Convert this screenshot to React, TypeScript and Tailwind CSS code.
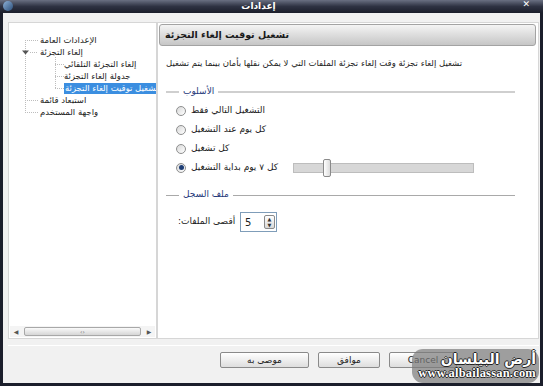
const tree = [
  { label: "الإعدادات العامة", level: 0 },
  { label: "إلغاء التجزئة", level: 0 },
  { label: "إلغاء التجزئة التلقائي", level: 1 },
  { label: "جدولة إلغاء التجزئة", level: 1 },
  { label: "تشغيل توقيت إلغاء التجزئة", level: 1, selected: true },
  { label: "استبعاد قائمة", level: 0 },
  { label: "واجهة المستخدم", level: 0 },
];

const modes = [
  { label: "التشغيل التالي فقط" },
  { label: "كل يوم عند التشغيل" },
  { label: "كل تشغيل" },
  { label: "كل ٧ يوم بداية التشغيل", checked: true },
];

function Radio({ checked }: { checked?: boolean }) {
  return (
    <span className="w-[10px] h-[10px] rounded-full border border-[#8e8f8f] bg-gradient-to-br from-[#d8d8d8] to-white flex items-center justify-center flex-shrink-0">
      {checked && <span className="w-[5px] h-[5px] rounded-full bg-[#1d3d75]" />}
    </span>
  );
}

function Legend({ label, thick }: { label: string; thick?: boolean }) {
  const line = thick ? "h-[2px] bg-[#cfcfcf]" : "h-px bg-[#a9a9a9]";
  return (
    <div className="flex items-center h-[12px] mr-[23px]">
      <span className={`w-[13px] ${line}`} />
      <span className="px-[4px] text-[#1f3a7a] whitespace-nowrap">{label}</span>
      <span className={`flex-1 ${line}`} />
    </div>
  );
}

function Button({ label, w }: { label: string; w: string }) {
  return (
    <button className={`${w} h-[16px] border border-[#8a8a8a] rounded-[2px] bg-gradient-to-b from-white to-[#dedede] text-[9px] text-[#222] leading-none`}>
      {label}
    </button>
  );
}

export default function App() {
  return (
    <div className="w-[543px] h-[386px] bg-[#1b1e2b] flex flex-col font-['DejaVu_Sans',sans-serif] text-[9px] text-[#222] relative overflow-hidden">
      <div className="h-[13px] relative bg-gradient-to-b from-[#6a7082] via-[#2e3242] to-[#1b1e2b] flex items-center justify-center pr-[26px]">
        <span className="absolute left-[3px] top-[1px] w-[10px] h-[10px] rounded-full bg-gradient-to-br from-[#8fb3d9] to-[#2d4f7a]" />
        <span className="text-white font-bold text-[9px] leading-none">إعدادات</span>
        <span className="absolute right-[13px] top-0 text-white text-[9px] font-bold leading-none">✕</span>
      </div>

      <div className="flex-1 mx-[3px] mb-[3px] bg-[#f1f1f1] flex flex-col pl-[5px] pr-[1px] pt-[9px]">
        <div className="flex h-[317px]">
          <div className="w-[149px] bg-white border border-[#d6d6d6] flex flex-col overflow-hidden">
            <div className="flex-1 relative pt-[11px] text-[8.5px]">
              <svg className="absolute inset-0" width="147" height="300">
                <g stroke="#bdbdbd" strokeDasharray="1 1" strokeWidth="1">
                  <line x1="16.5" y1="17" x2="16.5" y2="89" />
                  <line x1="16" y1="17.5" x2="29" y2="17.5" />
                  <line x1="21" y1="29.5" x2="29" y2="29.5" />
                  <line x1="16" y1="77.5" x2="29" y2="77.5" />
                  <line x1="16" y1="89.5" x2="29" y2="89.5" />
                  <line x1="46.5" y1="34" x2="46.5" y2="65" />
                  <line x1="46" y1="41.5" x2="55" y2="41.5" />
                  <line x1="46" y1="53.5" x2="55" y2="53.5" />
                  <line x1="46" y1="65.5" x2="55" y2="65.5" />
                </g>
                <path d="M13 27.5 L20 27.5 L16.5 31.5 Z" fill="#555" />
              </svg>
              {tree.map(t => (
                <div key={t.label} className={`relative h-[12px] flex items-center ${t.level ? "pl-[55px]" : "pl-[31px]"}`}>
                  <span className={`flex-shrink-0 whitespace-nowrap leading-none ${t.selected ? "bg-[#3b8ee0] text-white px-[1px] h-[11px] flex items-center tracking-[-0.3px]" : ""}`}>
                    {t.label}
                  </span>
                </div>
              ))}
            </div>
            <div className="h-[11px] mx-[1px] mb-[1px] bg-[#f4f4f4] flex items-center">
              <span className="w-[12px] text-center text-[6px] text-[#555]">◀</span>
              <span className="flex-1 h-[9px] mx-[2px] rounded-[2px] border border-[#a8a8a8] bg-gradient-to-b from-[#fafafa] to-[#d6d6d6] flex items-center justify-center text-[6px] text-[#666] leading-none">‹›</span>
              <span className="w-[12px] text-center text-[6px] text-[#555]">▶</span>
            </div>
          </div>

          <div className="flex-1 bg-white border border-[#d6d6d6] flex flex-col pl-[8px]">
            <div className="h-[22px] mt-[1px] -ml-[7px] mr-[2px] rounded-[3px] border border-[#a3a3a3] bg-gradient-to-b from-[#f4f4f4] to-[#c6c6c6] flex items-center pl-[5px]">
              <span className="font-bold text-[9.5px] text-[#1a1a1a]">تشغيل توقيت إلغاء التجزئة</span>
            </div>
            <div className="mt-[11px] h-[12px] flex items-center text-[8.5px]">تشغيل إلغاء تجزئة وقت إلغاء تجزئة الملفات التي لا يمكن نقلها بأمان بينما يتم تشغيل</div>

            <div className="mt-[17px]"><Legend label="الأسلوب" thick /></div>
            <div className="mt-[3px] flex flex-col">
              {modes.map(m => (
                <div key={m.label} className="h-[19px] flex items-center pl-[10px]">
                  <Radio checked={m.checked} />
                  <span className={`ml-[5px] whitespace-nowrap ${m.checked ? "w-[102px]" : ""}`}>{m.label}</span>
                  {m.checked && (
                    <div className="relative w-[181px] h-[10px] bg-[#d7d7d7] border border-[#bdbdbd]">
                      <span className="absolute left-[29px] -top-[5px] w-[8px] h-[18px] rounded-[2px] border border-[#8a8a8a] bg-gradient-to-r from-white to-[#dcdcdc]" />
                    </div>
                  )}
                </div>
              ))}
            </div>

            <div className="mt-[12px]"><Legend label="ملف السجل" /></div>
            <div className="mt-[11px] flex items-center pl-[12px] h-[20px]">
              <span className="w-[62px] whitespace-nowrap">:أقصى الملفات</span>
              <div className="w-[37px] h-[20px] border border-[#7f9db9] flex items-center justify-between pl-[4px] pr-[1px]">
                <span className="text-[10px]">5</span>
                <span className="w-[11px] h-[14px] border border-[#8a8a8a] rounded-[2px] bg-gradient-to-b from-white to-[#d9d9d9] flex flex-col items-center justify-center text-[5px] leading-[6px] text-[#333]">
                  <span>▲</span>
                  <span>▼</span>
                </span>
              </div>
            </div>
          </div>
        </div>

        <div className="mt-[6px] h-px bg-[#dcdcdc] border-b border-white" />

        <div className="mt-[6px] flex gap-[9px] pl-[212px]">
          <Button label="موصى به" w="w-[89px]" />
          <Button label="موافق" w="w-[62px]" />
          <Button label="Cancel" w="w-[68px]" />
        </div>
      </div>

      <div className="absolute left-[412px] top-[349px] w-[127px] h-[34px] rounded-[11px] bg-[#7a7a7a]/70 flex flex-col items-end justify-center pr-[3px]">
        <span dir="rtl" className="text-white font-bold text-[14px] leading-[15px] [text-shadow:_-1px_0_#222,_1px_0_#222,_0_-1px_#222,_0_1px_#222]">أرض البيلسان</span>
        <span className="text-white font-bold text-[12.5px] leading-[13px] tracking-[0.2px] font-['Liberation_Serif',serif] [text-shadow:_-1px_0_#222,_1px_0_#222,_0_-1px_#222,_0_1px_#222]">www.albailassan.com</span>
      </div>
    </div>
  );
}
